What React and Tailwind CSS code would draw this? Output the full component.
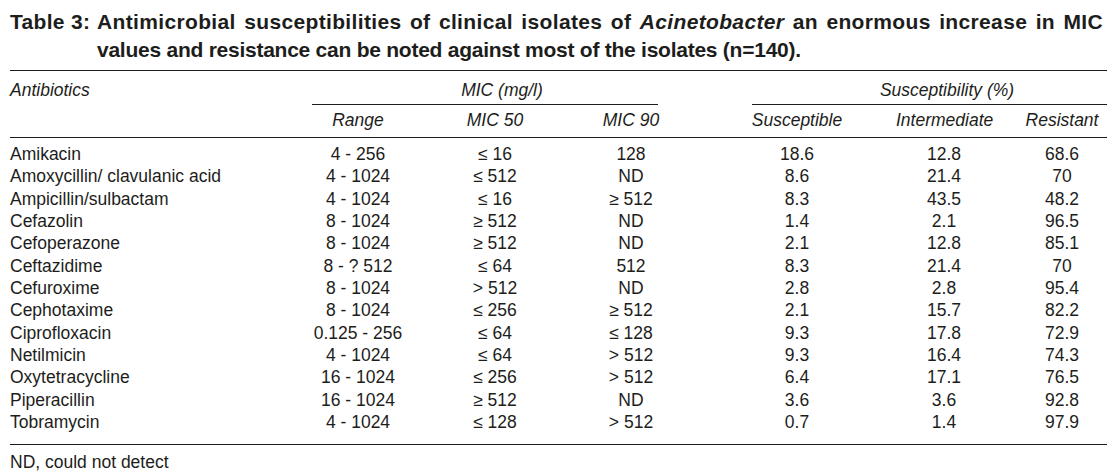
import React from 'react';

const rows = [
  ['Amikacin', '4 - 256', '≤ 16', '128', '18.6', '12.8', '68.6'],
  ['Amoxycillin/ clavulanic acid', '4 - 1024', '≤ 512', 'ND', '8.6', '21.4', '70'],
  ['Ampicillin/sulbactam', '4 - 1024', '≤ 16', '≥ 512', '8.3', '43.5', '48.2'],
  ['Cefazolin', '8 - 1024', '≥ 512', 'ND', '1.4', '2.1', '96.5'],
  ['Cefoperazone', '8 - 1024', '≥ 512', 'ND', '2.1', '12.8', '85.1'],
  ['Ceftazidime', '8 - ? 512', '≤ 64', '512', '8.3', '21.4', '70'],
  ['Cefuroxime', '8 - 1024', '> 512', 'ND', '2.8', '2.8', '95.4'],
  ['Cephotaxime', '8 - 1024', '≤ 256', '≥ 512', '2.1', '15.7', '82.2'],
  ['Ciprofloxacin', '0.125 - 256', '≤ 64', '≤ 128', '9.3', '17.8', '72.9'],
  ['Netilmicin', '4 - 1024', '≤ 64', '> 512', '9.3', '16.4', '74.3'],
  ['Oxytetracycline', '16 - 1024', '≤ 256', '> 512', '6.4', '17.1', '76.5'],
  ['Piperacillin', '16 - 1024', '≥ 512', 'ND', '3.6', '3.6', '92.8'],
  ['Tobramycin', '4 - 1024', '≤ 128', '> 512', '0.7', '1.4', '97.9'],
];

// column widths: name | range | mic50 | mic90 | susceptible | intermediate | spacer | resistant
const grid = 'grid grid-cols-[280px_136px_138px_134px_198px_96px_25px_90px]';

export default function App() {
  return (
    <div className="w-[1115px] h-[476px] bg-white text-[#1d1d1b] font-['Liberation_Sans',Arial,sans-serif] px-[10px] overflow-hidden">
      {/* caption */}
      <div className="flex pt-[8px] text-[21px] font-bold leading-[28px]">
        <div className="w-[87px] shrink-0 tracking-[0.3px]">Table 3:</div>
        <div className="flex-1 pr-[2px]">
          <div className="[text-align-last:justify] text-justify tracking-[0.35px] whitespace-nowrap">
            Antimicrobial susceptibilities of clinical isolates of <i>Acinetobacter</i> an enormous increase in MIC
          </div>
          <div className="tracking-[-0.25px]">values and resistance can be noted against most of the isolates (n=140).</div>
        </div>
      </div>

      <div className="mt-[6px] border-t border-[#1d1d1b] w-[1097px]">
        {/* header row 1 */}
        <div className={`${grid} italic text-[17.5px] leading-[18px]`}>
          <div className="pt-[10px]">Antibiotics</div>
          <div className="col-span-3 ml-[22px] mr-[40px] pt-[10px] pb-[5px] border-b border-[#1d1d1b] text-center pl-[34px]">
            MIC (mg/l)
          </div>
          <div className="col-span-4 ml-[54px] pt-[10px] pb-[5px] border-b border-[#1d1d1b] text-center pl-[35px]">
            Susceptibility (%)
          </div>
        </div>
        {/* header row 2 */}
        <div className={`${grid} italic text-[17.5px] leading-[18px] pt-[6px] pb-[8px] border-b border-[#1d1d1b]`}>
          <div></div>
          <div className="text-center">Range</div>
          <div className="text-center">MIC 50</div>
          <div className="text-center">MIC 90</div>
          <div className="text-center">Susceptible</div>
          <div className="text-center">Intermediate</div>
          <div></div>
          <div className="text-center">Resistant</div>
        </div>

        {/* body */}
        <div className="pt-[5px] pb-[11px] border-b border-[#1d1d1b] text-[17.5px]">
          {rows.map((r) => (
            <div key={r[0]} className={`${grid} h-[22.33px] leading-[22.33px]`}>
              <div>{r[0]}</div>
              <div className="text-center">{r[1]}</div>
              <div className="text-center">{r[2]}</div>
              <div className="text-center">{r[3]}</div>
              <div className="text-center">{r[4]}</div>
              <div className="text-center">{r[5]}</div>
              <div></div>
              <div className="text-center">{r[6]}</div>
            </div>
          ))}
        </div>

        <div className="pt-[8px] text-[17.5px] leading-[18px]">ND, could not detect</div>
      </div>
    </div>
  );
}
